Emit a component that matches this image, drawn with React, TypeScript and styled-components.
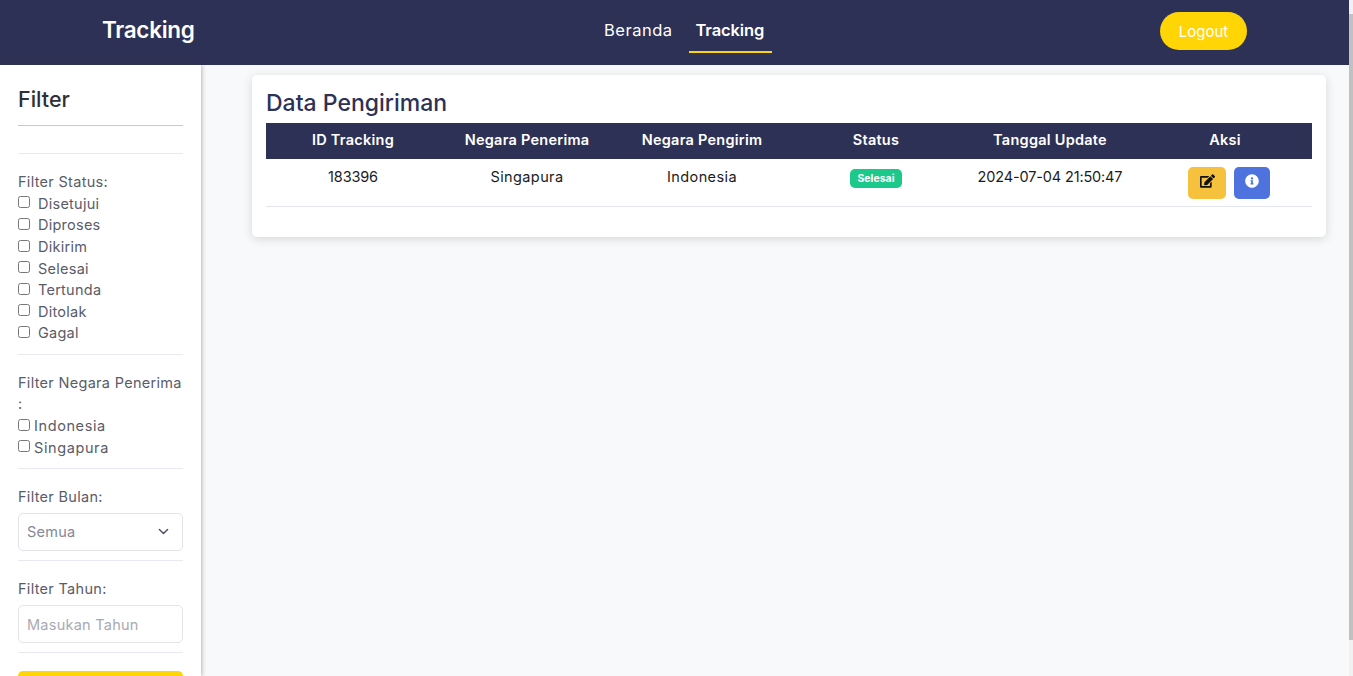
import { createGlobalStyle } from "styled-components";
import styled from "styled-components";

const GlobalStyle = createGlobalStyle`
  html, body {
    margin: 0;
    height: 100%;
    overflow: hidden;
  }
  body {
    font-family: "Inter", "Noto Sans", sans-serif;
    background: #f8f9fa;
    color: #5a5c69;
  }
  * { box-sizing: border-box; }
`;

const Page = styled.div`
  height: 676px;
  width: 1353px;
  display: flex;
  overflow: hidden;
`;

const Main = styled.div`
  width: 1349px;
  display: flex;
  flex-direction: column;
`;

const Scrollbar = styled.div`
  width: 4px;
  background: #f1f1f1;
  padding-top: 14px;
`;

const ScrollThumb = styled.div`
  width: 4px;
  height: 626px;
  background: #c1c1c1;
`;

const Navbar = styled.nav`
  height: 65px;
  flex: none;
  background: #2e3156;
  display: grid;
  grid-template-columns: 502px 1fr auto;
  align-items: center;
  padding: 0 102px 3px 102px;
`;

const Brand = styled.div`
  color: #fff;
  font-size: 22.5px;
  font-weight: 600;
  letter-spacing: -0.3px;
  padding-bottom: 4px;
`;

const NavLinks = styled.div`
  display: flex;
  align-items: center;
  gap: 7px;
`;

const NavLink = styled.a<{ $active?: boolean }>`
  color: #fff;
  font-size: 16.5px;
  font-weight: ${({ $active }) => ($active ? 600 : 400)};
  letter-spacing: ${({ $active }) => ($active ? "-0.1px" : "0.5px")};
  padding: ${({ $active }) => ($active ? "0 8px 0 7px" : "0")};
  height: 41px;
  margin-top: 2px;
  line-height: 36px;
  margin-left: ${({ $active }) => ($active ? "9px" : "0")};
  border-bottom: 2px solid ${({ $active }) => ($active ? "#ffd505" : "transparent")};
`;

const LogoutButton = styled.button`
  width: 87px;
  height: 38px;
  border: none;
  border-radius: 19px;
  background: #ffd505;
  color: #fff;
  font-family: inherit;
  font-size: 15px;
`;

const Body = styled.div`
  flex: 1;
  display: flex;
  min-height: 0;
`;

const Sidebar = styled.aside`
  width: 201px;
  flex: none;
  background: #fff;
  box-shadow: 1px 0 4px rgba(58, 59, 69, 0.35);
  padding: 19px 18px 0;
  overflow: hidden;
`;

const SidebarTitle = styled.h2`
  margin: 0;
  font-size: 21.5px;
  line-height: 30px;
  font-weight: 500;
  color: #2f2f35;
  padding-bottom: 11px;
  border-bottom: 1px solid #c8c9cd;
  margin-bottom: 27px;
`;

const Divider = styled.hr`
  margin: 0;
  border: none;
  border-top: 1px solid #e8e9f2;
`;

const FilterGroup = styled.div<{ $tight?: boolean }>`
  padding: 17px 0 ${({ $tight }) => ($tight ? "9px" : "10px")};
  border-bottom: 1px solid #e8e9f2;
`;

const FilterLabel = styled.div`
  font-size: 14.5px;
  line-height: 21.6px;
  letter-spacing: 0.3px;
  color: #5a5c69;
`;

const CheckRow = styled.label<{ $wide?: boolean }>`
  display: flex;
  align-items: center;
  height: 21.6px;
  font-size: 14.5px;
  letter-spacing: ${({ $wide }) => ($wide ? "0.25px" : "0.6px")};
  color: #5a5c69;
  gap: ${({ $wide }) => ($wide ? "8px" : "4px")};

  input {
    margin: 0;
    width: 12px;
    height: 12px;
    flex: none;
    position: relative;
    top: -1px;
  }
`;

const SelectBox = styled.div`
  height: 38px;
  margin-top: 5px;
  border: 1px solid #e3e3ec;
  border-radius: 5px;
  padding: 0 13px 0 8px;
  display: flex;
  align-items: center;
  justify-content: space-between;
  font-size: 14.5px;
  letter-spacing: 0.25px;
  color: #858796;
`;

const TextInput = styled.input`
  display: block;
  width: 100%;
  height: 38px;
  margin-top: 6px;
  border: 1px solid #e3e3ec;
  border-radius: 5px;
  padding: 0 8px;
  font-family: inherit;
  font-size: 14.5px;
  letter-spacing: 0.25px;
  &::placeholder { color: #a9aab5; }
`;

const ApplyButton = styled.button`
  display: block;
  width: 100%;
  height: 38px;
  margin-top: 18px;
  border: none;
  border-radius: 5px;
  background: #ffd505;
`;

const Content = styled.main`
  flex: 1;
  padding: 10px 23px 0 51px;
`;

const Card = styled.section`
  background: #fff;
  border-radius: 5px;
  box-shadow: 0 2px 10px rgba(58, 59, 69, 0.18);
  padding: 12px 14px 30px;
`;

const CardTitle = styled.h3`
  margin: 0 0 4px;
  font-size: 23px;
  line-height: 32px;
  font-weight: 500;
  color: #2e3156;
`;

const Table = styled.table`
  width: 100%;
  border-collapse: collapse;
  table-layout: fixed;
`;

const HeadCell = styled.th`
  background: #2e3156;
  color: #fff;
  height: 36px;
  font-size: 14.5px;
  font-weight: 600;
  letter-spacing: 0.25px;
  padding: 0 0 3px;
`;

const Cell = styled.td<{ $spaced?: boolean }>`
  height: 47px;
  border-bottom: 1px solid #e3e6f0;
  font-size: 14.5px;
  letter-spacing: ${({ $spaced }) => ($spaced ? "0.4px" : "-0.15px")};
  color: #1c1c1c;
  text-align: center;
  vertical-align: top;
  padding: 8px 0 0;
  line-height: 20px;
`;

const Badge = styled.span`
  display: inline-block;
  background: #1cc88a;
  color: #fff;
  font-size: 10.5px;
  font-weight: 700;
  letter-spacing: 0;
  line-height: 19px;
  width: 52px;
  border-radius: 5px;
  margin-top: 2px;
`;

const ActionRow = styled.div`
  display: flex;
  gap: 8px;
  padding-left: 50px;
`;

const ActionButton = styled.button<{ $bg: string; $w: number }>`
  width: ${({ $w }) => $w}px;
  height: 32px;
  padding: 0 0 4px;
  border: none;
  border-radius: 5px;
  background: ${({ $bg }) => $bg};
  display: flex;
  align-items: center;
  justify-content: center;
`;

const statuses = ["Disetujui", "Diproses", "Dikirim", "Selesai", "Tertunda", "Ditolak", "Gagal"];
const countries = ["Indonesia", "Singapura"];
const columns = ["ID Tracking", "Negara Penerima", "Negara Pengirim", "Status", "Tanggal Update", "Aksi"];
const widths = [174, 174, 176, 172, 176, 174];

function EditIcon() {
  return (
    <svg width="15" height="14" viewBox="0 0 576 512" fill="#111">
      <path d="M402.6 83.2l90.2 90.2c3.8 3.8 3.8 10 0 13.8L274.4 405.6l-92.8 10.3c-12.4 1.4-22.9-9.1-21.5-21.5l10.3-92.8L388.8 83.2c3.8-3.8 10-3.8 13.8 0zm162-22.9l-48.8-48.8c-15.2-15.2-39.9-15.2-55.2 0l-35.4 35.4c-3.8 3.8-3.8 10 0 13.8l90.2 90.2c3.8 3.8 10 3.8 13.8 0l35.4-35.4c15.2-15.3 15.2-40 0-55.2zM384 346.2V448H64V128h229.8c3.2 0 6.2-1.3 8.5-3.5l40-40c7.6-7.6 2.2-20.5-8.5-20.5H48C21.5 64 0 85.5 0 112v352c0 26.5 21.5 48 48 48h352c26.5 0 48-21.5 48-48V306.2c0-10.7-12.9-16-20.5-8.5l-40 40c-2.2 2.3-3.5 5.3-3.5 8.5z" />
    </svg>
  );
}

function InfoIcon() {
  return (
    <svg width="14" height="14" viewBox="0 0 512 512" fill="#fff">
      <path d="M256 8C119 8 8 119 8 256s111 248 248 248 248-111 248-248S393 8 256 8zm0 110c23.2 0 42 18.8 42 42s-18.8 42-42 42-42-18.8-42-42 18.8-42 42-42zm56 254c0 6.6-5.4 12-12 12h-88c-6.6 0-12-5.4-12-12v-24c0-6.6 5.4-12 12-12h12v-64h-12c-6.6 0-12-5.4-12-12v-24c0-6.6 5.4-12 12-12h64c6.6 0 12 5.4 12 12v100h12c6.6 0 12 5.4 12 12v24z" />
    </svg>
  );
}

function Chevron() {
  return (
    <svg width="11" height="7" viewBox="0 0 16 10" fill="none" stroke="#4a4c57" strokeWidth="2" strokeLinecap="round" strokeLinejoin="round">
      <path d="M2 2l6 6 6-6" />
    </svg>
  );
}

export default function App() {
  return (
    <Page>
      <GlobalStyle />
      <Main>
        <Navbar>
          <Brand>Tracking</Brand>
          <NavLinks>
            <NavLink>Beranda</NavLink>
            <NavLink $active>Tracking</NavLink>
          </NavLinks>
          <LogoutButton>Logout</LogoutButton>
        </Navbar>
        <Body>
          <Sidebar>
            <SidebarTitle>Filter</SidebarTitle>
            <Divider />
            <FilterGroup>
              <FilterLabel>Filter Status:</FilterLabel>
              {statuses.map((s) => (
                <CheckRow key={s} $wide>
                  <input type="checkbox" />
                  {s}
                </CheckRow>
              ))}
            </FilterGroup>
            <FilterGroup>
              <FilterLabel>Filter Negara Penerima :</FilterLabel>
              {countries.map((c) => (
                <CheckRow key={c}>
                  <input type="checkbox" />
                  {c}
                </CheckRow>
              ))}
            </FilterGroup>
            <FilterGroup $tight>
              <FilterLabel>Filter Bulan:</FilterLabel>
              <SelectBox>
                Semua
                <Chevron />
              </SelectBox>
            </FilterGroup>
            <FilterGroup $tight>
              <FilterLabel>Filter Tahun:</FilterLabel>
              <TextInput placeholder="Masukan Tahun" />
            </FilterGroup>
            <ApplyButton />
          </Sidebar>
          <Content>
            <Card>
              <CardTitle>Data Pengiriman</CardTitle>
              <Table>
                <colgroup>
                  {widths.map((w, i) => (
                    <col key={i} style={{ width: w }} />
                  ))}
                </colgroup>
                <thead>
                  <tr>
                    {columns.map((c) => (
                      <HeadCell key={c}>{c}</HeadCell>
                    ))}
                  </tr>
                </thead>
                <tbody>
                  <tr>
                    <Cell>183396</Cell>
                    <Cell $spaced>Singapura</Cell>
                    <Cell $spaced>Indonesia</Cell>
                    <Cell>
                      <Badge>Selesai</Badge>
                    </Cell>
                    <Cell>2024-07-04 21:50:47</Cell>
                    <Cell>
                      <ActionRow>
                        <ActionButton $bg="#f6c23e" $w={38}>
                          <EditIcon />
                        </ActionButton>
                        <ActionButton $bg="#4e73df" $w={36}>
                          <InfoIcon />
                        </ActionButton>
                      </ActionRow>
                    </Cell>
                  </tr>
                </tbody>
              </Table>
            </Card>
          </Content>
        </Body>
      </Main>
      <Scrollbar>
        <ScrollThumb />
      </Scrollbar>
    </Page>
  );
}
